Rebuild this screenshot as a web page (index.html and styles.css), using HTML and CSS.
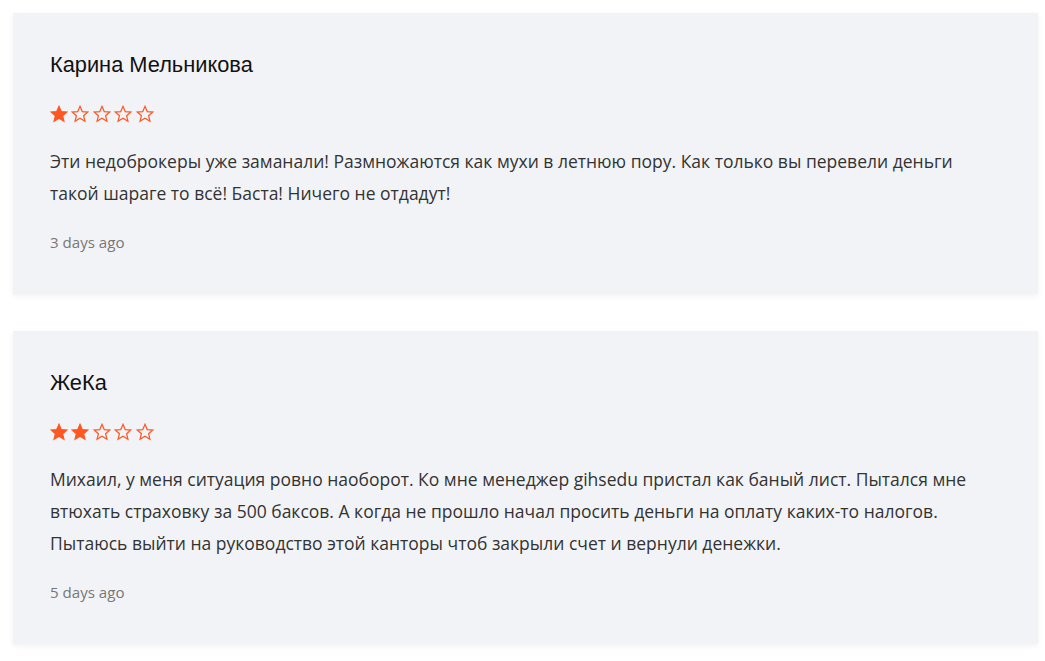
FILE: index.html
```html
<!DOCTYPE html>
<html lang="ru">
<head>
<meta charset="utf-8">
<link rel="stylesheet" href="styles.css">
</head>
<body>
<div class="list">
  <div class="card">
    <div class="name">Карина Мельникова</div>
    <div class="stars">
      <svg class="star full" viewBox="0 0 24 24"><path d="M12 1.8l3 7 7.5.6-5.7 4.9 1.8 7.4L12 17.7l-6.6 4 1.8-7.4L1.5 9.4l7.5-.6z"/></svg>
      <svg class="star" viewBox="0 0 24 24"><path d="M12 1.8l3 7 7.5.6-5.7 4.9 1.8 7.4L12 17.7l-6.6 4 1.8-7.4L1.5 9.4l7.5-.6z"/></svg>
      <svg class="star" viewBox="0 0 24 24"><path d="M12 1.8l3 7 7.5.6-5.7 4.9 1.8 7.4L12 17.7l-6.6 4 1.8-7.4L1.5 9.4l7.5-.6z"/></svg>
      <svg class="star" viewBox="0 0 24 24"><path d="M12 1.8l3 7 7.5.6-5.7 4.9 1.8 7.4L12 17.7l-6.6 4 1.8-7.4L1.5 9.4l7.5-.6z"/></svg>
      <svg class="star" viewBox="0 0 24 24"><path d="M12 1.8l3 7 7.5.6-5.7 4.9 1.8 7.4L12 17.7l-6.6 4 1.8-7.4L1.5 9.4l7.5-.6z"/></svg>
    </div>
    <p class="text">Эти недоброкеры уже заманали! Размножаются как мухи в летнюю пору. Как только вы перевели деньги такой шараге то всё! Баста! Ничего не отдадут!</p>
    <div class="date">3 days ago</div>
  </div>
  <div class="card">
    <div class="name">ЖеКа</div>
    <div class="stars">
      <svg class="star full" viewBox="0 0 24 24"><path d="M12 1.8l3 7 7.5.6-5.7 4.9 1.8 7.4L12 17.7l-6.6 4 1.8-7.4L1.5 9.4l7.5-.6z"/></svg>
      <svg class="star full" viewBox="0 0 24 24"><path d="M12 1.8l3 7 7.5.6-5.7 4.9 1.8 7.4L12 17.7l-6.6 4 1.8-7.4L1.5 9.4l7.5-.6z"/></svg>
      <svg class="star" viewBox="0 0 24 24"><path d="M12 1.8l3 7 7.5.6-5.7 4.9 1.8 7.4L12 17.7l-6.6 4 1.8-7.4L1.5 9.4l7.5-.6z"/></svg>
      <svg class="star" viewBox="0 0 24 24"><path d="M12 1.8l3 7 7.5.6-5.7 4.9 1.8 7.4L12 17.7l-6.6 4 1.8-7.4L1.5 9.4l7.5-.6z"/></svg>
      <svg class="star" viewBox="0 0 24 24"><path d="M12 1.8l3 7 7.5.6-5.7 4.9 1.8 7.4L12 17.7l-6.6 4 1.8-7.4L1.5 9.4l7.5-.6z"/></svg>
    </div>
    <p class="text">Михаил, у меня ситуация ровно наоборот. Ко мне менеджер gihsedu пристал как баный лист. Пытался мне втюхать страховку за 500 баксов. А когда не прошло начал просить деньги на оплату каких-то налогов. Пытаюсь выйти на руководство этой канторы чтоб закрыли счет и вернули денежки.</p>
    <div class="date">5 days ago</div>
  </div>
</div>
</body>
</html>
```

FILE: styles.css
```css
* { box-sizing: border-box; }
html, body { margin: 0; background: #fff; }
body { padding: 13px 7px 13px 13px; }
.list {
  display: flex;
  flex-direction: column;
  gap: 37px;
}
.card {
  width: 1025px;
  background: #f2f3f7;
  box-shadow: 0 2px 6px rgba(0, 0, 0, 0.06);
  padding: 39px 60px 42px 37px;
}
.name {
  font-family: "Liberation Sans", Arial, sans-serif;
  font-size: 21.8px;
  line-height: 26px;
  color: #111;
}
.stars {
  display: flex;
  gap: 3.4px;
  margin-top: 27px;
  height: 18px;
}
.star {
  width: 18px;
  height: 18px;
  display: block;
}
.star path {
  fill: none;
  stroke: #ff5722;
  stroke-width: 1.6;
  stroke-linejoin: miter;
}
.star.full path {
  fill: #ff5722;
}
.text {
  margin: 22px 0 0;
  font-family: "Open Sans", sans-serif;
  font-size: 17.5px;
  line-height: 32px;
  color: #333;
}
.date {
  margin-top: 23px;
  font-family: "Open Sans", sans-serif;
  font-size: 15.1px;
  line-height: 20px;
  color: #777;
}
```
